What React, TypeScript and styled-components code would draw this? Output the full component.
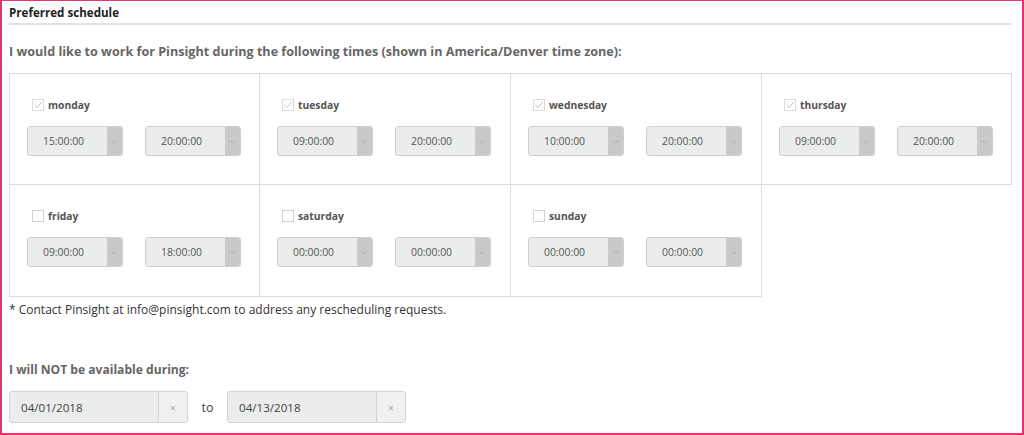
import styled, { createGlobalStyle } from 'styled-components';

const GlobalStyle = createGlobalStyle`
  html, body {
    margin: 0;
    padding: 0;
    background: #ffffff;
  }
  body {
    font-family: "Open Sans", "Noto Sans", sans-serif;
    color: #333333;
  }
  * {
    box-sizing: border-box;
  }
`;

const Frame = styled.div`
  width: 1024px;
  height: 435px;
  border: 2px solid #e8336b;
  border-top-width: 1px;
  padding: 0 11px 0 7px;
  overflow: hidden;
`;

const Title = styled.h3`
  margin: 0;
  padding: 4px 0 3px;
  font-size: 11.6px;
  font-weight: 700;
  color: #222222;
  border-bottom: 2px solid #e2e2e2;
  line-height: 15px;
`;

const Lead = styled.p`
  margin: 18px 0 13px;
  font-size: 12.6px;
  font-weight: 700;
  color: #666666;
  line-height: 17px;
`;

const DayGrid = styled.div`
  display: grid;
  grid-template-columns: 251px 251px 251px 250px;
  grid-auto-rows: 112px;
`;

const DayCell = styled.div<{ $col: number; $row: number }>`
  border: 1px solid #dddddd;
  margin-left: ${p => (p.$col > 0 ? '-1px' : '0')};
  margin-top: ${p => (p.$row > 0 ? '-1px' : '0')};
  padding: 24px 0 0 17px;
`;

const DayHead = styled.label`
  display: flex;
  align-items: center;
  gap: 4px;
  margin-left: 5px;
  height: 14px;
  font-size: 10.3px;
  font-weight: 700;
  color: #555555;
`;

const Box = styled.span<{ $checked: boolean }>`
  width: 12px;
  height: 12px;
  border: 1px solid ${p => (p.$checked ? '#dcdcdc' : '#d2d2d2')};
  background: #ffffff;
  display: inline-flex;
  align-items: center;
  justify-content: center;
`;

const Selects = styled.div`
  display: flex;
  gap: 22px;
  margin-top: 14px;
`;

const Select = styled.div`
  display: flex;
  width: 96px;
  height: 30px;
  border: 1px solid #cfcfcf;
  border-radius: 3px;
  background: #ebecec;
  overflow: hidden;
`;

const SelectValue = styled.span`
  flex: 1;
  display: flex;
  align-items: center;
  justify-content: center;
  font-size: 10.4px;
  color: #555555;
  padding-right: 8px;
`;

const SelectArrow = styled.span`
  width: 15px;
  background: #c9c9c9;
  display: flex;
  align-items: center;
  justify-content: center;
`;

const Note = styled.p`
  margin: 4px 0 0;
  font-size: 12px;
  color: #333333;
  line-height: 17px;
`;

const Subhead = styled.p`
  margin: 43px 0 13px;
  font-size: 12.1px;
  font-weight: 700;
  color: #666666;
  line-height: 17px;
`;

const DateRow = styled.div`
  display: flex;
  align-items: center;
`;

const DateField = styled.div`
  display: flex;
  height: 32px;
  border: 1px solid #d4d4d4;
  border-radius: 3px;
  background: #ebecec;
  overflow: hidden;
`;

const DateValue = styled.span`
  width: 149px;
  display: flex;
  align-items: center;
  padding-left: 11px;
  font-size: 11.6px;
  color: #444444;
  border-right: 1px solid #d4d4d4;
`;

const Clear = styled.span`
  width: 28px;
  display: flex;
  align-items: center;
  justify-content: center;
  font-size: 11px;
  color: #aaaaaa;
  background: #f1f1f1;
`;

const To = styled.span`
  width: 39px;
  text-align: center;
  font-size: 12.5px;
  color: #444444;
`;

type Day = { name: string; on: boolean; from: string; to: string };

const days: Day[] = [
  { name: 'monday', on: true, from: '15:00:00', to: '20:00:00' },
  { name: 'tuesday', on: true, from: '09:00:00', to: '20:00:00' },
  { name: 'wednesday', on: true, from: '10:00:00', to: '20:00:00' },
  { name: 'thursday', on: true, from: '09:00:00', to: '20:00:00' },
  { name: 'friday', on: false, from: '09:00:00', to: '18:00:00' },
  { name: 'saturday', on: false, from: '00:00:00', to: '00:00:00' },
  { name: 'sunday', on: false, from: '00:00:00', to: '00:00:00' },
];

const Check = () => (
  <svg width="10" height="10" viewBox="0 0 10 10">
    <path d="M1.5 5.2 L4 7.6 L8.6 2.2" fill="none" stroke="#c4c4c4" strokeWidth="1" />
  </svg>
);

const Chevron = () => (
  <svg width="7" height="5" viewBox="0 0 7 5">
    <path d="M0.5 1 L3.5 4 L6.5 1" fill="none" stroke="#a8a8a8" strokeWidth="0.8" />
  </svg>
);

const TimeSelect = ({ value }: { value: string }) => (
  <Select>
    <SelectValue>{value}</SelectValue>
    <SelectArrow>
      <Chevron />
    </SelectArrow>
  </Select>
);

export default function App() {
  return (
    <>
      <GlobalStyle />
      <Frame>
        <Title>Preferred schedule</Title>
        <Lead>I would like to work for Pinsight during the following times (shown in America/Denver time zone):</Lead>
        <DayGrid>
          {days.map((d, i) => (
            <DayCell key={d.name} $col={i % 4} $row={Math.floor(i / 4)}>
              <DayHead>
                <Box $checked={d.on}>{d.on && <Check />}</Box>
                {d.name}
              </DayHead>
              <Selects>
                <TimeSelect value={d.from} />
                <TimeSelect value={d.to} />
              </Selects>
            </DayCell>
          ))}
        </DayGrid>
        <Note>* Contact Pinsight at info@pinsight.com to address any rescheduling requests.</Note>
        <Subhead>I will NOT be available during:</Subhead>
        <DateRow>
          <DateField>
            <DateValue>04/01/2018</DateValue>
            <Clear>×</Clear>
          </DateField>
          <To>to</To>
          <DateField>
            <DateValue>04/13/2018</DateValue>
            <Clear>×</Clear>
          </DateField>
        </DateRow>
      </Frame>
    </>
  );
}
